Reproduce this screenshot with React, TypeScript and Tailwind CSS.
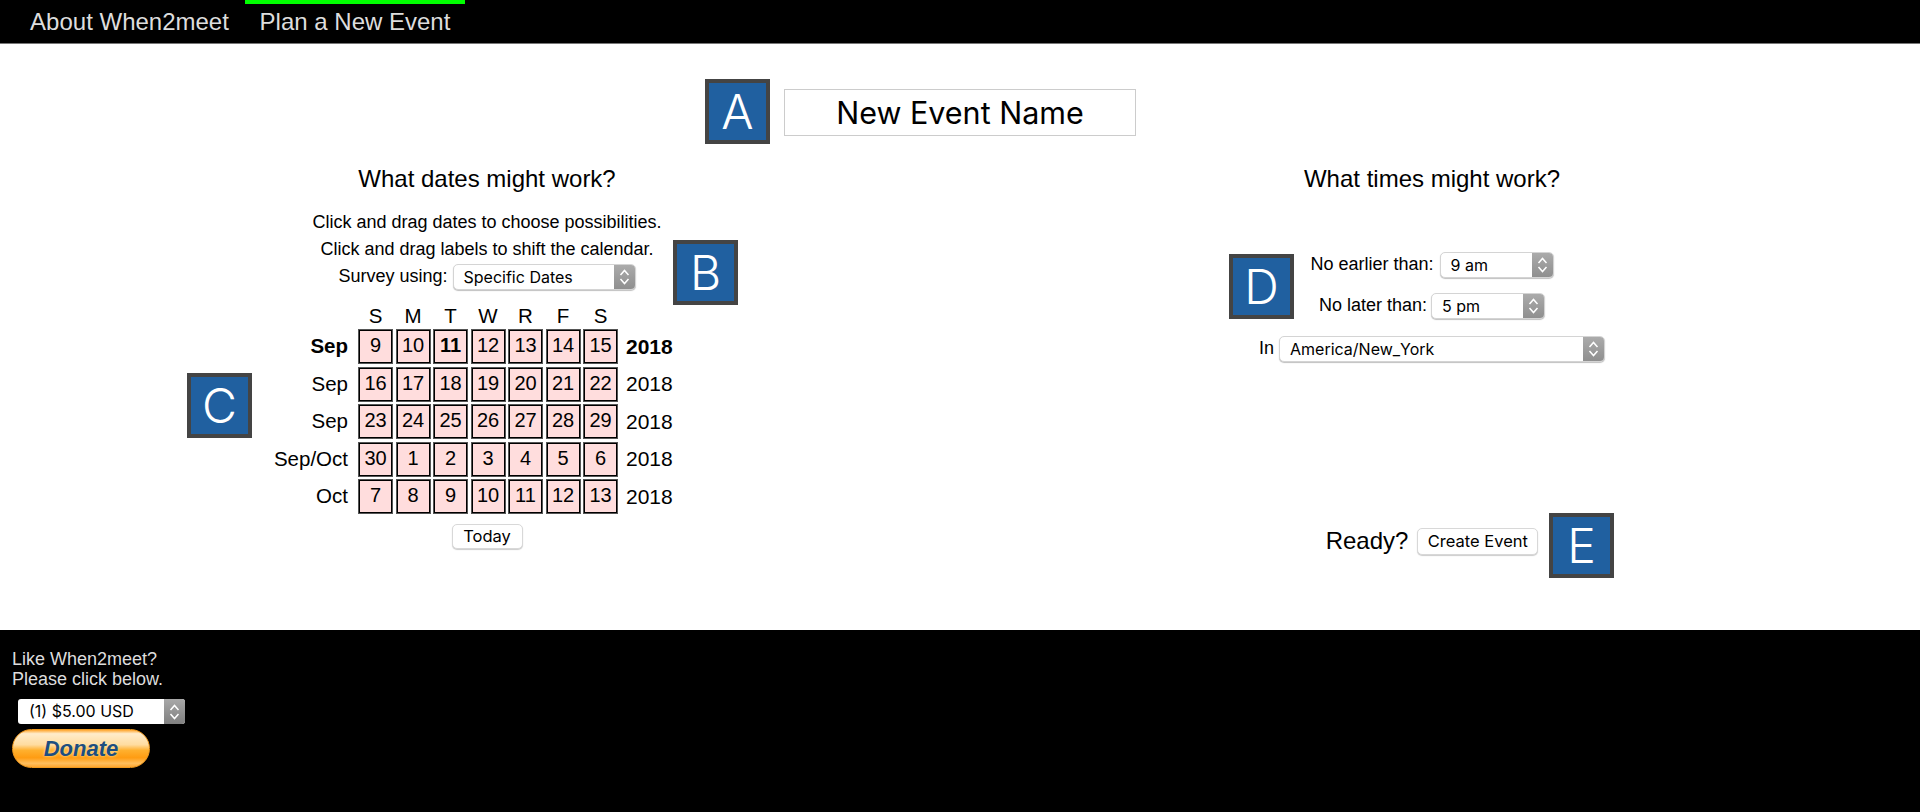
const sans = "font-['Liberation_Sans',Arial,sans-serif]";

const rows = [
  { label: "Sep", year: "2018", days: [9, 10, 11, 12, 13, 14, 15], bold: true },
  { label: "Sep", year: "2018", days: [16, 17, 18, 19, 20, 21, 22] },
  { label: "Sep", year: "2018", days: [23, 24, 25, 26, 27, 28, 29] },
  { label: "Sep/Oct", year: "2018", days: [30, 1, 2, 3, 4, 5, 6] },
  { label: "Oct", year: "2018", days: [7, 8, 9, 10, 11, 12, 13] },
];

const weekdays = ["S", "M", "T", "W", "R", "F", "S"];

function Marker({ letter, className }: { letter: string; className: string }) {
  return (
    <div className={`flex h-[65px] w-[65px] shrink-0 items-center justify-center border-[4px] border-[#444444] bg-[#2060a0] font-['Inter',sans-serif] text-[48px] font-light leading-none text-white ${className}`}>
      {letter}
    </div>
  );
}

function Chevrons() {
  return (
    <svg width="11" height="18" viewBox="0 0 11 18" fill="none" stroke="white" strokeWidth="1.5">
      <path d="M1.5 7 L5.5 2.5 L9.5 7" />
      <path d="M1.5 11 L5.5 15.5 L9.5 11" />
    </svg>
  );
}

function FakeSelect({ value, className }: { value: string; className: string }) {
  return (
    <div className={`flex h-[26px] items-stretch overflow-hidden rounded-[5px] border border-[#d4d4d4] bg-white shadow-[0_1px_1px_rgba(0,0,0,0.25)] ${className}`}>
      <span className="flex-1 pl-[10px] font-['Inter',sans-serif] text-[16px] leading-[24px] text-black">{value}</span>
      <span className="flex w-[21px] items-center justify-center bg-gradient-to-b from-[#ababab] to-[#8f8f8f]">
        <Chevrons />
      </span>
    </div>
  );
}

function MacButton({ label, className }: { label: string; className: string }) {
  return (
    <div className={`flex items-center justify-center rounded-[5px] border border-[#d8d8d8] bg-white font-['Inter',sans-serif] text-[16.5px] text-black shadow-[0_1px_1px_rgba(0,0,0,0.2)] ${className}`}>
      {label}
    </div>
  );
}

export default function App() {
  return (
    <div className={`min-h-[812px] bg-white text-black ${sans}`}>
      <div className="flex h-[44px] border-b border-[#777777] bg-black pl-[14px] text-[24px] text-[#dddddd]">
        <div className="flex w-[231px] items-center justify-center">About When2meet</div>
        <div className="flex w-[220px] items-center justify-center border-t-[4px] border-[#00ff00] pb-[4px]">Plan a New Event</div>
      </div>

      <div className="h-[586px]">
        <div className="flex items-center gap-[14px] pl-[705px] pt-[35px]">
          <Marker letter="A" className="" />
          <input
            readOnly
            value="New Event Name"
            className="mt-[2px] h-[47px] w-[352px] border border-[#cccccc] bg-white text-center font-['Inter',sans-serif] text-[30.5px] text-black outline-none"
          />
        </div>

        <div className="flex pt-[20px]">
          <div className="relative flex w-[974px] flex-col items-center">
            <div className="text-[24px] leading-[30px]">What dates might work?</div>
            <div className="mt-[15px] text-[18px] leading-[27px]">Click and drag dates to choose possibilities.</div>
            <div className="text-[18px] leading-[27px]">Click and drag labels to shift the calendar.</div>
            <div className="flex items-center gap-[5px] text-[18px]">
              <span>Survey using:</span>
              <FakeSelect value="Specific Dates" className="w-[183px]" />
            </div>
            <Marker letter="B" className="absolute left-[673px] top-[76px]" />
            <Marker letter="C" className="absolute left-[187px] top-[209px]" />

            <div className="mt-[12px] flex flex-col">
              <div className="flex h-[26px] gap-[2.5px] pl-[91px] pt-[1px] text-[20.5px] leading-[26px]">
                {weekdays.map((d, i) => (
                  <div key={i} className="w-[35px] text-center">{d}</div>
                ))}
              </div>
              {rows.map((r) => (
                <div key={r.days[0]} className={`flex h-[37.5px] items-center text-[20.5px] ${r.bold ? "font-bold" : ""}`}>
                  <div className="w-[81px] whitespace-nowrap text-right">{r.label}</div>
                  <div className="ml-[10px] flex gap-[2.5px] font-normal">
                    {r.days.map((d) => (
                      <div
                        key={d}
                        className={`flex h-[35px] w-[35px] justify-center border border-[#555555] bg-[#ffdddd] text-[20px] leading-[30px] shadow-[inset_0_0_0_1px_#000000] ${d === 11 && r.bold ? "font-bold" : ""}`}
                      >
                        {d}
                      </div>
                    ))}
                  </div>
                  <div className="ml-[8px] w-[81px] pb-[1px] text-[21px]">{r.year}</div>
                </div>
              ))}
              <MacButton label="Today" className="mt-[8px] h-[25px] w-[71px] self-center" />
            </div>
          </div>

          <div className="relative flex w-[916px] flex-col items-center">
            <div className="text-[24px] leading-[30px]">What times might work?</div>
            <div className="mt-[57px] flex items-center gap-[6px] text-[18px]">
              <span>No earlier than:</span>
              <FakeSelect value="9 am" className="w-[114px]" />
            </div>
            <div className="mt-[14px] flex items-center gap-[4px] text-[18px]">
              <span>No later than:</span>
              <FakeSelect value="5 pm" className="w-[114px]" />
            </div>
            <div className="mt-[16px] flex items-center gap-[5px] text-[18px]">
              <span>In</span>
              <FakeSelect value="America/New_York" className="w-[326px]" />
            </div>
            <Marker letter="D" className="absolute left-[255px] top-[90px]" />
            <div className="mt-[161px] flex items-center gap-[9px]">
              <span className="text-[24px]">Ready?</span>
              <MacButton label="Create Event" className="h-[27px] w-[121px]" />
            </div>
            <Marker letter="E" className="absolute left-[575px] top-[349px]" />
          </div>
        </div>
      </div>

      <div className="h-[182px] bg-black pl-[12px] pt-[19px] text-[18px] leading-[20px] text-[#dddddd]">
        <div>Like When2meet?</div>
        <div>Please click below.</div>
        <div className="ml-[6px] mt-[10px] flex h-[25px] w-[167px] items-stretch overflow-hidden rounded-[3px] bg-white">
          <span className="flex-1 pl-[11px] font-['Inter',sans-serif] text-[16px] leading-[24px] text-black">(1) $5.00 USD</span>
          <span className="flex w-[21px] items-center justify-center bg-gradient-to-b from-[#a8a8a8] to-[#808080]">
            <Chevrons />
          </span>
        </div>
        <div className="mt-[5px] flex h-[39px] w-[138px] items-center justify-center rounded-full border border-[#f09a20] bg-[linear-gradient(to_bottom,#ffa62e_0%,#ffeccb_10%,#ffdca0_40%,#ffb02e_55%,#ff9c12_75%,#ffbf5e_90%,#ffa62e_100%)] text-[22px] font-bold italic text-[#1d4e80] [text-shadow:0_0_3px_#ffe9b0]">
          Donate
        </div>
      </div>
    </div>
  );
}
